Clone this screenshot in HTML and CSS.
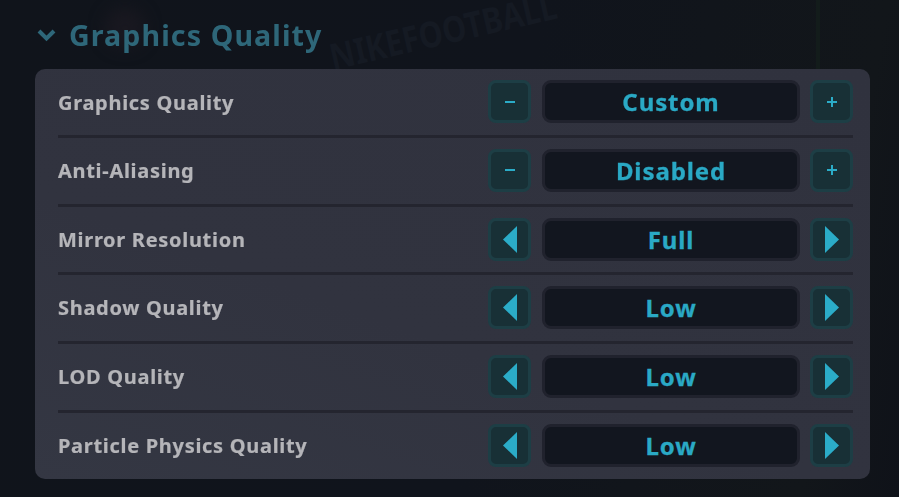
FILE: index.html
```html
<!DOCTYPE html>
<html lang="en">
<head>
<meta charset="utf-8">
<title>Graphics Quality</title>
<link rel="stylesheet" href="styles.css">
</head>
<body>
<div class="backdrop" aria-hidden="true">
  <span class="bg-text">NIKEFOOTBALL</span>
  <span class="bg-line"></span>
  <span class="bg-blob"></span>
</div>
<main class="page">
  <h1 class="heading">
    <svg class="chevron" viewBox="0 0 19 14"><path d="M2 3l7.500 7.500L17 3" fill="none" stroke="currentColor" stroke-width="4"/></svg>
    <span>Graphics Quality</span>
  </h1>
  <section class="panel">
    <div class="row">
      <span class="label">Graphics Quality</span>
      <div class="control">
        <button class="btn"><span class="minus"></span></button>
        <div class="value">Custom</div>
        <button class="btn"><span class="plus"></span></button>
      </div>
    </div>
    <div class="row">
      <span class="label">Anti-Aliasing</span>
      <div class="control">
        <button class="btn"><span class="minus"></span></button>
        <div class="value">Disabled</div>
        <button class="btn"><span class="plus"></span></button>
      </div>
    </div>
    <div class="row">
      <span class="label">Mirror Resolution</span>
      <div class="control">
        <button class="btn"><svg class="arrow" viewBox="0 0 14 27"><path d="M14 0v27L0 13.500z"/></svg></button>
        <div class="value">Full</div>
        <button class="btn"><svg class="arrow" viewBox="0 0 14 27"><path d="M0 0v27l14-13.500z"/></svg></button>
      </div>
    </div>
    <div class="row">
      <span class="label">Shadow Quality</span>
      <div class="control">
        <button class="btn"><svg class="arrow" viewBox="0 0 14 27"><path d="M14 0v27L0 13.500z"/></svg></button>
        <div class="value">Low</div>
        <button class="btn"><svg class="arrow" viewBox="0 0 14 27"><path d="M0 0v27l14-13.500z"/></svg></button>
      </div>
    </div>
    <div class="row">
      <span class="label">LOD Quality</span>
      <div class="control">
        <button class="btn"><svg class="arrow" viewBox="0 0 14 27"><path d="M14 0v27L0 13.500z"/></svg></button>
        <div class="value">Low</div>
        <button class="btn"><svg class="arrow" viewBox="0 0 14 27"><path d="M0 0v27l14-13.500z"/></svg></button>
      </div>
    </div>
    <div class="row">
      <span class="label">Particle Physics Quality</span>
      <div class="control">
        <button class="btn"><svg class="arrow" viewBox="0 0 14 27"><path d="M14 0v27L0 13.500z"/></svg></button>
        <div class="value">Low</div>
        <button class="btn"><svg class="arrow" viewBox="0 0 14 27"><path d="M0 0v27l14-13.500z"/></svg></button>
      </div>
    </div>
  </section>
</main>
</body>
</html>
```
FILE: styles.css
```css
* { box-sizing: border-box; }
html, body { height: 100%; }
body {
  margin: 0;
  overflow: hidden;
  background: #10141b;
  font-family: "Noto Sans", "Open Sans", sans-serif;
  font-weight: 700;
}
.backdrop {
  position: fixed;
  inset: 0;
  overflow: hidden;
  background: linear-gradient(100deg, #10141b 0%, #10141c 55%, #12161a 90%, #0f1219 100%);
}
.bg-text {
  position: absolute;
  left: 326px;
  top: 40px;
  font-size: 36px;
  line-height: 36px;
  color: #151a23;
  transform: rotate(-13deg) scaleX(0.85);
  transform-origin: left top;
  white-space: nowrap;
}
.bg-line {
  position: absolute;
  left: 816px;
  top: 0;
  width: 4px;
  height: 70px;
  background: #131c1b;
}
.bg-blob {
  position: absolute;
  left: 105px;
  top: 8px;
  width: 40px;
  height: 40px;
  border-radius: 50%;
  background: #191820;
  filter: blur(8px);
}
.page {
  position: relative;
  padding: 12px 29px 0 35px;
}
.heading {
  display: flex;
  align-items: center;
  gap: 13px;
  height: 46px;
  margin: 0 0 11px;
  padding-left: 2px;
  font-size: 28.6px;
  font-weight: 700;
  letter-spacing: 1.1px;
  line-height: 46px;
  color: #2e6779;
}
.chevron {
  width: 19px;
  height: 14px;
}
.panel {
  padding: 0 17px 0 23px;
  border-radius: 10px;
  background: linear-gradient(200deg, #30323e 0%, #31333f 60%, #343743 100%);
}
.row {
  display: flex;
  align-items: center;
  justify-content: space-between;
  height: 68.75px;
  padding: 11px 0 11.75px;
  border-bottom: 3px solid #24252f;
}
.row:first-child .label {
  margin-top: 2px;
}
.row:last-child {
  height: 65.75px;
  border-bottom: 0;
}
.label {
  font-size: 20px;
  letter-spacing: 0.7px;
  color: #b5b5b9;
  -webkit-text-stroke: 0.2px #b5b5b9;
}
.control {
  display: flex;
  align-items: center;
  gap: 10px;
}
.btn {
  display: flex;
  align-items: center;
  justify-content: center;
  width: 43px;
  height: 43px;
  padding: 0;
  border: 3px solid #1d3e45;
  border-radius: 8px;
  background: #183036;
  color: #2bacc8;
}
.value {
  width: 258px;
  height: 43px;
  margin-left: 1px;
  border: 3px solid #20222d;
  border-radius: 9px;
  background: #12161f;
  font-size: 24px;
  letter-spacing: 0.9px;
  line-height: 37px;
  text-align: center;
  color: #2aa9c5;
  -webkit-text-stroke: 0.3px #2aa9c5;
}
.minus {
  width: 10px;
  height: 2px;
  background: currentColor;
}
.plus {
  position: relative;
  width: 10px;
  height: 2px;
  background: currentColor;
}
.plus::after {
  content: "";
  position: absolute;
  left: 4px;
  top: -4px;
  width: 2px;
  height: 10px;
  background: currentColor;
}
.arrow {
  display: block;
  width: 14px;
  height: 27px;
  fill: currentColor;
}
```
